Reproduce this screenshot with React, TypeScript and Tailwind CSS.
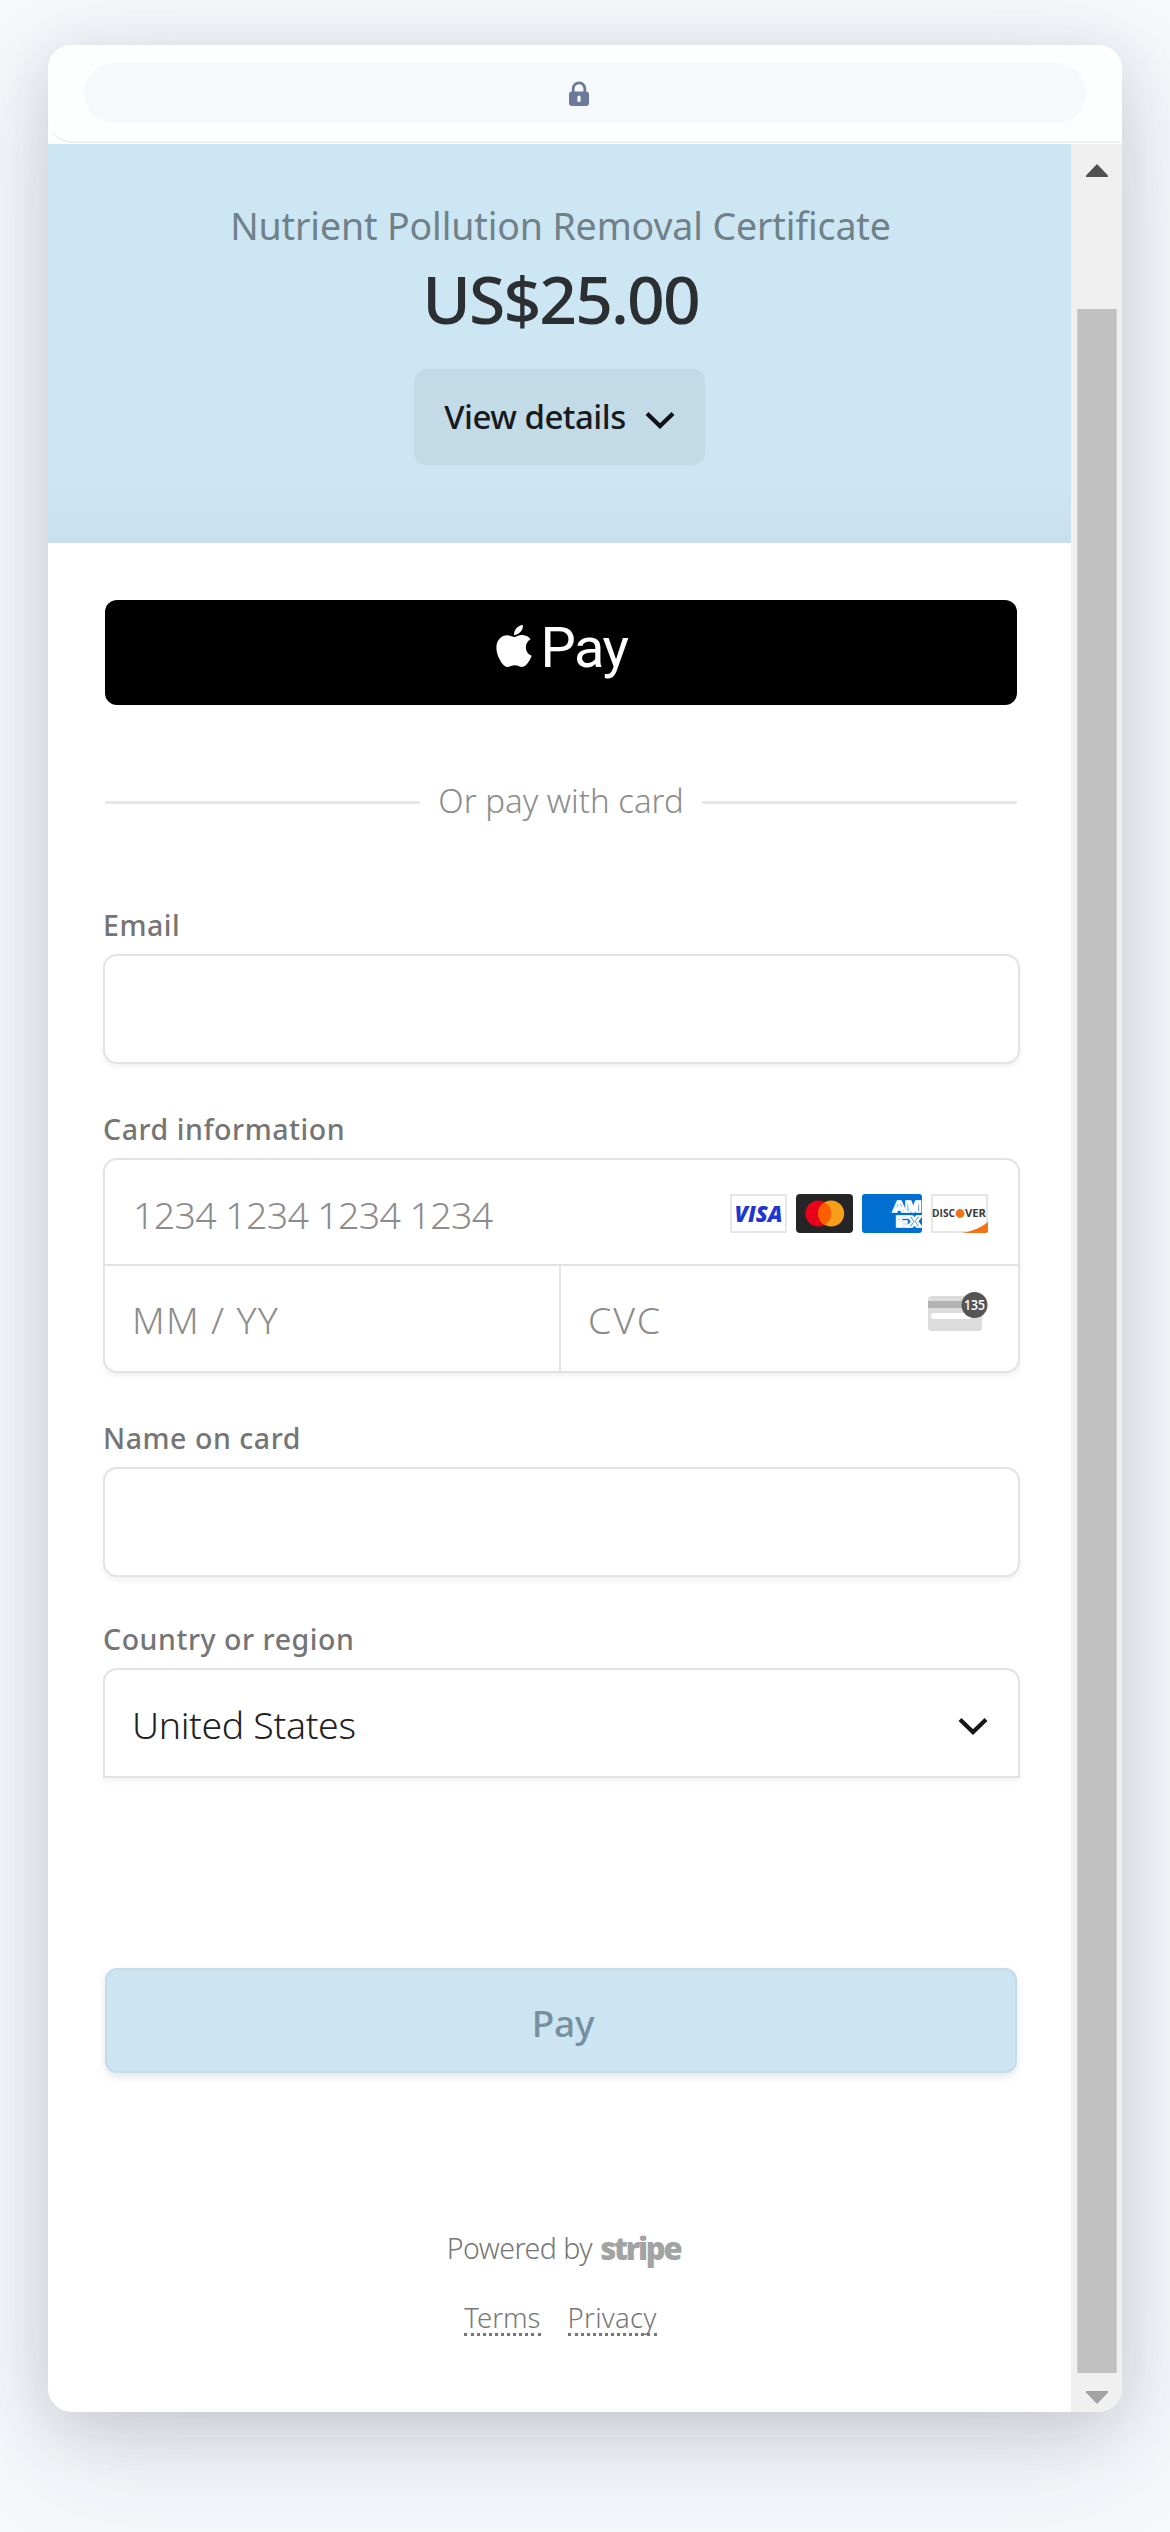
import React from "react";
import { FaApple } from "react-icons/fa";

function Chevron({ className }: { className: string }) {
  return (
    <svg viewBox="0 0 30 18" fill="none" stroke="currentColor" strokeWidth="4.2" className={className}>
      <path d="M2 2.5 L15 15 L28 2.5" />
    </svg>
  );
}

function Lock() {
  return (
    <svg viewBox="0 0 20 25" className="h-[25px] w-5 text-[#6b7a99]">
      <path d="M4.2 11.5V7.6a5.8 5.8 0 0 1 11.6 0v3.9" fill="none" stroke="currentColor" strokeWidth="2.8" />
      <rect x="0" y="10.5" width="20" height="14.5" rx="3" fill="currentColor" />
      <rect x="8.4" y="14.5" width="3.2" height="6.6" rx="1.6" fill="#f5f8fc" />
    </svg>
  );
}

function Label({ children, className }: { children: string; className: string }) {
  return (
    <label className={"block h-10 text-[28.5px] leading-10 font-medium tracking-[0.55px] text-[#757575] " + className}>
      {children}
    </label>
  );
}

const field = "border-[2px] border-[#e3e3e3] bg-white shadow-[0_3px_6px_rgba(0,0,0,0.06)]";

function Visa() {
  return (
    <svg viewBox="0 0 57 39" className="h-[39px] w-[57px]">
      <rect x="1" y="1" width="55" height="37" fill="#fff" stroke="#e6e6e6" strokeWidth="2" />
      <text x="28.5" y="27.5" textAnchor="middle" textLength="48" lengthAdjust="spacingAndGlyphs" fontFamily="Open Sans" fontWeight="800" fontStyle="italic" fontSize="22" fill="#1f35d0">VISA</text>
    </svg>
  );
}

function Mastercard() {
  return (
    <svg viewBox="0 0 57 39" className="h-[39px] w-[57px]">
      <rect width="57" height="39" rx="4" fill="#252525" />
      <circle cx="22.3" cy="19.5" r="13" fill="#eb001b" />
      <circle cx="35.2" cy="19.5" r="13" fill="#f79e1b" />
      <path d="M28.75 8.2a13 13 0 0 1 0 22.6a13 13 0 0 1 0-22.6z" fill="#ff5f00" />
    </svg>
  );
}

function Amex() {
  return (
    <svg viewBox="0 0 60 39" className="h-[39px] w-[60px]">
      <rect width="60" height="39" rx="3" fill="#016fd0" />
      <g fontFamily="Roboto" fontWeight="900" fontSize="14" fill="#016fd0" stroke="#fff" strokeWidth="1.7">
        <text x="31" y="18" textLength="28" lengthAdjust="spacingAndGlyphs">AM</text>
        <text x="34" y="32.5" textLength="25" lengthAdjust="spacingAndGlyphs">EX</text>
      </g>
    </svg>
  );
}

function Discover() {
  return (
    <svg viewBox="0 0 57 39" className="h-[39px] w-[57px]">
      <rect x="1" y="1" width="55" height="37" fill="#fff" stroke="#e6e6e6" strokeWidth="2" />
      <path d="M31 39C42 37 51 33 57 28V36.5Q57 39 54.5 39Z" fill="#f47216" />
      <g fontFamily="Open Sans" fontWeight="700" fontSize="11" fill="#3a3a3a">
        <text x="1" y="23.3" textLength="23" lengthAdjust="spacingAndGlyphs">DISC</text>
        <text x="34" y="23.3" textLength="21" lengthAdjust="spacingAndGlyphs">VER</text>
      </g>
      <circle cx="29" cy="19.5" r="4.4" fill="#f47216" />
    </svg>
  );
}

function CvcCard() {
  return (
    <svg viewBox="0 0 60 40" className="h-10 w-[60px]">
      <rect x="0" y="4" width="54" height="35" rx="3.5" fill="#dcdcdc" />
      <rect x="0" y="9" width="54" height="7" fill="#b3b3b3" />
      <rect x="3" y="21" width="41" height="6" rx="3" fill="#fff" />
      <circle cx="46.5" cy="13" r="13" fill="#555" />
      <text x="46.5" y="18" textAnchor="middle" textLength="21" lengthAdjust="spacingAndGlyphs" fontFamily="Open Sans" fontWeight="600" fontSize="13.5" fill="#fff">135</text>
    </svg>
  );
}

export default function App() {
  return (
    <div className="h-[2532px] w-[1170px] overflow-hidden bg-[#f6f8fc] px-12 pt-[45px] font-['Noto_Sans','Open_Sans',sans-serif]">
      <div className="flex h-[2367px] w-[1074px] flex-col overflow-hidden rounded-[24px] bg-white shadow-[0_12px_60px_rgba(40,40,60,0.15),0_40px_120px_rgba(40,40,60,0.12)]">
        <header className="h-[99px] shrink-0 bg-white">
          <div className="h-[98px] rounded-bl-[24px] border-b-2 border-[#eef2f7] bg-[#fdfefe] px-9 pt-[18px]">
            <div className="flex h-[60px] items-center justify-center rounded-full bg-[#f5f9fc] pr-3">
              <Lock />
            </div>
          </div>
        </header>

        <div className="flex min-h-0 flex-1">
          <main className="w-[1023px]">
            <section className="flex h-[399px] flex-col items-center bg-[#cde6f3] bg-[linear-gradient(to_top,#c8e0ed,#cde6f3_60px)] pt-14">
              <h1 className="h-[52px] pl-0.5 text-[37.5px] leading-[52px] tracking-[-0.13px] whitespace-nowrap text-[#708189]">Nutrient Pollution Removal Certificate</h1>
              <p className="mt-1.5 h-20 pl-0.5 text-[66px] leading-[80px] font-medium tracking-[-1.9px] text-[#2b2f31]">US$25.00</p>
              <button className="mt-[31px] flex h-24 w-[291px] items-center justify-center gap-[19px] rounded-[12px] bg-[#c3dae7]">
                <span className="text-[33px] leading-10 font-medium tracking-[-0.5px] whitespace-nowrap text-[#171b1d]">View details</span>
                <Chevron className="mt-1.5 h-[18px] w-[30px] text-[#101213]" />
              </button>
            </section>

            <form className="pr-[51px] pl-[55px]">
              <button type="button" className="mt-[57px] mr-[3px] ml-0.5 flex h-[105px] w-[912px] items-start justify-center rounded-[12px] bg-black pt-[18px] text-white">
                <FaApple className="mt-1 mr-[6px] h-[48px] w-[40px]" />
                <span className="font-[Roboto] text-[56px] leading-[60px] tracking-[-1.5px]">Pay</span>
              </button>

              <div className="mt-[71px] ml-0.5 flex h-[50px] w-[912px] items-center">
                <span className="mt-0.5 h-[3px] w-[315px] bg-[#e7e7e7]" />
                <span className="flex-1 text-center text-[33px] leading-[50px] font-light whitespace-nowrap text-[#8c8c8c]">Or pay with card</span>
                <span className="mt-0.5 h-[3px] w-[315px] bg-[#e7e7e7]" />
              </div>

              <Label className="mt-[79px]">Email</Label>
              <div className={"mt-[9px] h-[110px] rounded-[14px] " + field} />

              <Label className="mt-[45px]">Card information</Label>
              <div className={"mt-[9px] flex h-[215px] flex-col rounded-[14px] text-[37.5px] font-light text-[#8c8c8c] " + field}>
                <div className="flex h-[106px] items-center border-b-[2px] border-[#e3e3e3] pr-[30px] pl-[28px]">
                  <span className="mt-1.5 flex-1 tracking-[-0.65px]">1234 1234 1234 1234</span>
                  <div className="mt-0.5 flex gap-[9px]">
                    <Visa />
                    <Mastercard />
                    <Amex />
                    <Discover />
                  </div>
                </div>
                <div className="flex flex-1">
                  <div className="flex w-[456px] items-center border-r-[2px] border-[#e3e3e3] pl-[27px]">
                    <span className="mt-1 tracking-[1.3px]">MM / YY</span>
                  </div>
                  <div className="flex flex-1 items-center justify-between pr-[30px] pl-[27px]">
                    <span className="mt-1 tracking-[2px]">CVC</span>
                    <span className="-mt-3.5"><CvcCard /></span>
                  </div>
                </div>
              </div>

              <Label className="mt-[45px]">Name on card</Label>
              <div className={"mt-[9px] h-[110px] rounded-[14px] " + field} />

              <Label className="mt-[42px]">Country or region</Label>
              <div className={"mt-[9px] flex h-[110px] items-center justify-between rounded-t-[14px] pr-[30px] pl-[27px] " + field}>
                <span className="mt-1 text-[37.5px] font-light tracking-[-0.35px] text-[#222]">United States</span>
                <Chevron className="mt-1.5 h-[18px] w-[30px] text-[#161616]" />
              </div>

              <button type="button" className="mt-[190px] ml-0.5 flex h-[105px] w-[912px] items-center justify-center rounded-[12px] border-2 border-[#c2dcea] bg-[#cde5f3] text-[37px] font-medium text-[#7590a0] shadow-[0_4px_8px_rgba(0,0,0,0.10)]">
                <span className="mt-1 pl-1 tracking-[-0.3px]">Pay</span>
              </button>

              <div className="mt-[155px] flex h-10 items-center justify-center pl-1 text-[28.5px] leading-10 text-[#777]">
                <span className="font-light tracking-[-0.5px] whitespace-nowrap">Powered by</span>
                <span className="ml-2 font-['Open_Sans'] text-[31px] font-extrabold tracking-[-2.3px] text-[#a3a3a3]">stripe</span>
              </div>
              <div className="mt-[30px] flex h-10 justify-center gap-[27px] pr-0.5 text-[27.5px] leading-10 font-light text-[#777]">
                <a className="h-[38px] border-b-[3px] border-dotted border-[#777]">Terms</a>
                <a className="h-[38px] border-b-[3px] border-dotted border-[#777] tracking-[0.3px]">Privacy</a>
              </div>
            </form>
          </main>

          <aside className="flex w-[51px] flex-col items-center bg-[#f0f0f0]">
            <svg viewBox="0 0 22 13" className="mt-5 h-[13px] w-[22px]"><path d="M0 13V11.5L11 0L22 11.5V13Z" fill="#505050" /></svg>
            <div className="mt-[132px] h-[2064px] w-10 border-x border-[#cfcfcf] bg-[#c1c1c1]" />
            <svg viewBox="0 0 22 13" className="mt-[18px] h-[13px] w-[22px]"><path d="M0 0V1.5L11 13L22 1.5V0Z" fill="#a3a3a3" /></svg>
          </aside>
        </div>
      </div>
    </div>
  );
}
